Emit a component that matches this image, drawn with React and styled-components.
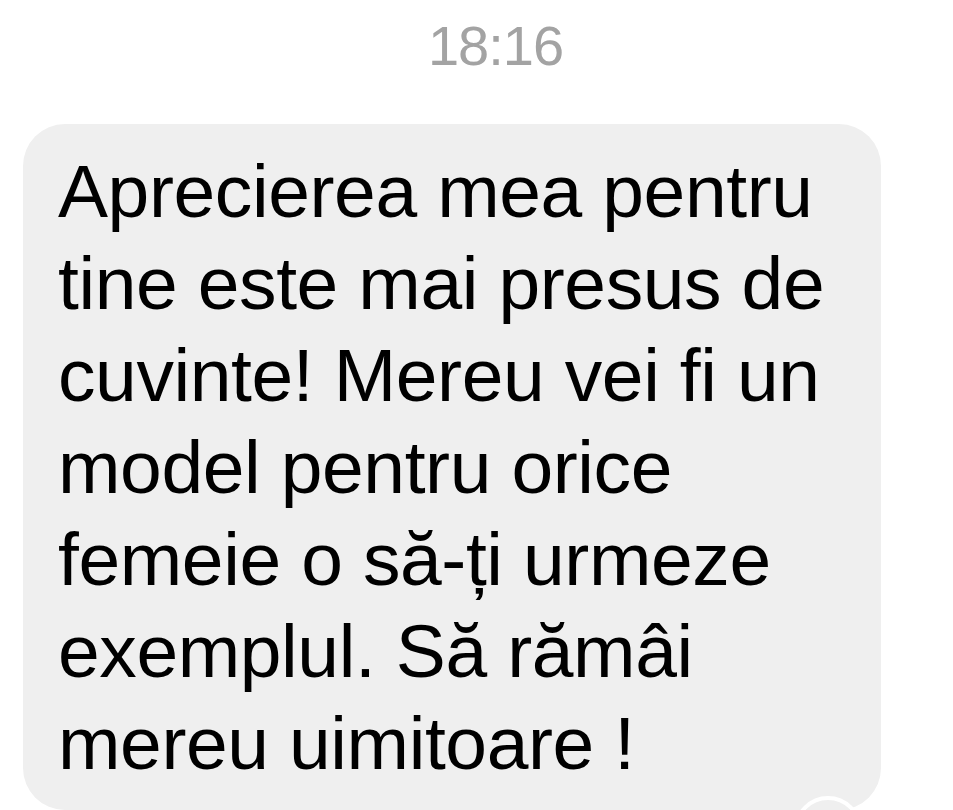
import React from "react";
import styled, { createGlobalStyle } from "styled-components";

const GlobalStyle = createGlobalStyle`
  html, body {
    margin: 0;
    padding: 0;
    background: #ffffff;
    height: 810px;
    overflow: hidden;
  }
  body {
    font-family: "Liberation Sans", Arial, sans-serif;
  }
`;

const Screen = styled.div`
  width: 953px;
  height: 810px;
  overflow: hidden;
  display: flex;
  flex-direction: column;
  background: #fff;
`;

const TimeRow = styled.div`
  display: flex;
  justify-content: center;
  margin-top: 18px;
  padding-left: 38px;
  height: 56px;
`;

const Time = styled.span`
  font-size: 56px;
  line-height: 56px;
  color: #a3a3a3;
  letter-spacing: -1px;
`;

const Thread = styled.div`
  display: flex;
  padding: 50px 0 0 23px;
`;

const Bubble = styled.div`
  position: relative;
  width: 858px;
  box-sizing: border-box;
  padding: 21px 20px 21px 35px;
  background: #efefef;
  border-radius: 42px;
  color: #000;
  font-size: 75px;
  line-height: 92px;
  letter-spacing: -0.4px;
`;

const Line = styled.div`
  white-space: nowrap;
`;

const Reaction = styled.div`
  position: absolute;
  right: 19px;
  top: calc(100% - 14px);
  width: 60px;
  height: 60px;
  border-radius: 50%;
  border: 4px solid #fff;
  background: #efefef;
`;

const lines = [
  "Aprecierea mea pentru",
  "tine este mai presus de",
  "cuvinte! Mereu vei fi un",
  "model pentru orice",
  "femeie o să-ți urmeze",
  "exemplul. Să rămâi",
  "mereu uimitoare !",
];

const App = () => {
  return (
    <>
      <GlobalStyle />
      <Screen>
        <TimeRow>
          <Time>18:16</Time>
        </TimeRow>
        <Thread>
          <Bubble>
            {lines.map((l) => (
              <Line key={l}>{l}</Line>
            ))}
            <Reaction />
          </Bubble>
        </Thread>
      </Screen>
    </>
  );
};

export default App;
